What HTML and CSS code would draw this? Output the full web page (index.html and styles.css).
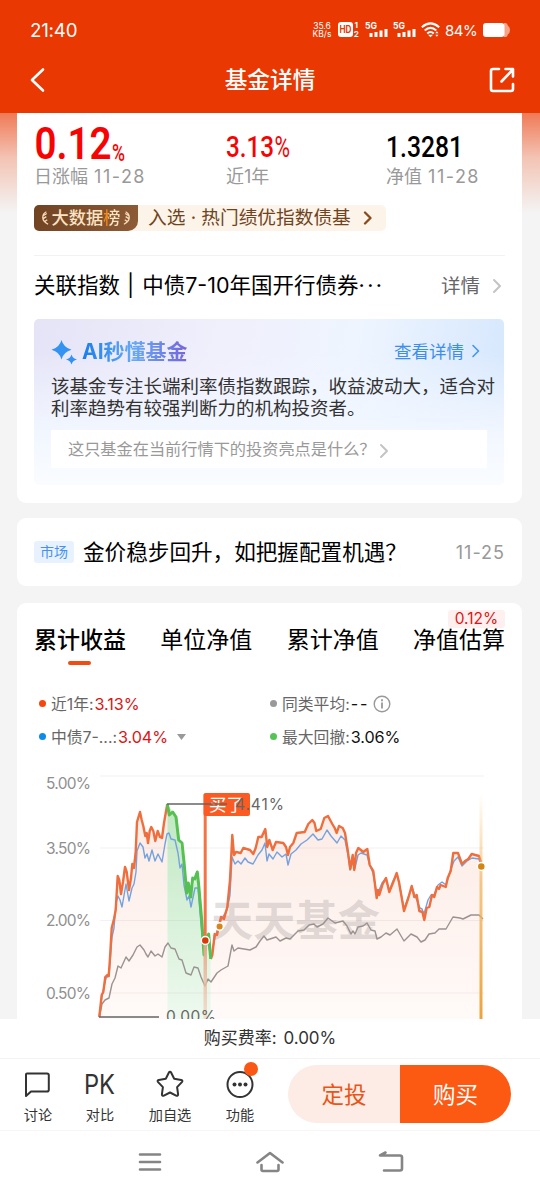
FILE: index.html
```html
<!DOCTYPE html>
<html lang="zh-CN">
<head>
  <meta charset="UTF-8" />
  <meta name="viewport" content="width=device-width, initial-scale=1.0" />
  <title>基金详情</title>
  <link rel="stylesheet" href="styles.css">
</head>
<body>
  <header class="top">
    <div class="status">
      <span class="clock">21:40</span>
      <div class="status-icons">
        <div class="speed"><span>35.6</span><span>KB/s</span></div>
        <svg class="hd" width="22" height="18" viewBox="0 0 22 18">
          <rect x="0" y="1" width="15" height="15" rx="3" fill="#fff"/>
          <text x="1.500" y="12.300" font-size="10" font-weight="700" fill="#e93802" textLength="12" lengthAdjust="spacingAndGlyphs">HD</text>
          <text x="16.500" y="7" font-size="8" font-weight="700" fill="#fff">1</text>
          <text x="15.700" y="16" font-size="8" font-weight="700" fill="#fff">2</text>
        </svg>
        <svg class="sim" width="23" height="18" viewBox="0 0 23 18" fill="#fff">
          <text x="0" y="8" font-size="9.500" font-weight="700" textLength="12" lengthAdjust="spacingAndGlyphs">5G</text>
          <path d="M4.500 12h3v4h-3zM9.500 11h3v5h-3zM14.500 9.500h3v6.500h-3zM19.500 8h3v8h-3z"/>
        </svg>
        <svg class="sim" width="23" height="18" viewBox="0 0 23 18" fill="#fff">
          <text x="0" y="8" font-size="9.500" font-weight="700" textLength="12" lengthAdjust="spacingAndGlyphs">5G</text>
          <path d="M4.500 12h3v4h-3zM9.500 11h3v5h-3zM14.500 9.500h3v6.500h-3zM19.500 8h3v8h-3z"/>
        </svg>
        <svg class="wifi" width="19" height="18" viewBox="0 0 19 18" fill="none" stroke="#fff" stroke-width="2">
          <path d="M.8 6.200Q9.500-1.400 18.200 6.200M3.700 9.400Q9.500 4.300 15.300 9.400M6.200 12.400Q9.500 9.600 12.800 12.400"/>
          <path d="M7 13.800h5L9.500 16.300z" fill="#fff" stroke="none"/>
          <path d="M14.300 12.200l1.600-2 1.600 2zM14.300 13.800l1.600 2 1.600-2z" fill="#fff" stroke="none"/>
        </svg>
        <span class="percent">84%</span>
        <svg class="battery" width="27" height="16" viewBox="0 0 27 16">
          <path d="M21 1h1.500q2 0 2.300 2.500Q27 5 27 8t-2.200 4.500Q24.500 15 22.500 15H21z" fill="#f6a588"/>
          <rect x="0" y="1" width="21.500" height="14" rx="3" fill="#fff"/>
        </svg>
      </div>
    </div>
    <div class="title-bar">
      <svg width="16" height="26" viewBox="0 0 16 26"><path d="M14 2.500 3 13l11 10.500" class="line white"/></svg>
      <h1>基金详情</h1>
      <svg width="26" height="26" viewBox="0 0 26 26"><path d="M10 2H4Q2 2 2 4v18q0 2 2 2h18q2 0 2-2v-5M12.500 14.500 23.500 3M16.500 2H24v7.500" class="line white"/></svg>
    </div>
  </header>

  <main>
    <section class="card summary">
      <div class="stats">
        <div class="stat">
          <svg width="120" height="54" viewBox="34 113 120 54" fill="#f60404">
            <text x="34.500" y="159" font-size="45" font-weight="600" textLength="77" lengthAdjust="spacingAndGlyphs">0.12</text>
            <text x="112" y="161" font-size="24" font-weight="500" textLength="13" lengthAdjust="spacingAndGlyphs">%</text>
          </svg>
          <span>日涨幅 <em>11-28</em></span>
        </div>
        <div class="stat">
          <svg width="120" height="54" viewBox="226 113 120 54" fill="#f60404">
            <text x="226" y="157" font-size="29" font-weight="500" textLength="48" lengthAdjust="spacingAndGlyphs">3.13</text>
            <text x="274.500" y="157" font-size="29" font-weight="400" textLength="15.500" lengthAdjust="spacingAndGlyphs">%</text>
          </svg>
          <span>近1年</span>
        </div>
        <div class="stat">
          <svg width="110" height="54" viewBox="386 113 110 54" fill="#000">
            <text x="386" y="157" font-size="29" font-weight="500" textLength="77" lengthAdjust="spacingAndGlyphs">1.3281</text>
          </svg>
          <span>净值 <em>11-28</em></span>
        </div>
      </div>

      <div class="rank">
        <div class="rank-tag">
          <svg width="8" height="18" viewBox="0 0 9 18"><path d="M6 2Q2 4 2 8.500 2 13 8 16M2.500 6.500 6.500 4M2 10 6 7.500M3.500 13.500 7 11" class="leaf"/></svg>
          <b>大数据<i>榜</i></b>
          <svg width="8" height="18" viewBox="0 0 9 18"><path d="M3 2Q7 4 7 8.500 7 13 1 16M6.500 6.500 2.500 4M7 10 3 7.500M5.500 13.500 2 11" class="leaf"/></svg>
        </div>
        <span class="rank-text">入选 · 热门绩优指数债基</span>
        <svg width="10" height="14" viewBox="0 0 10 14"><path d="M2 1.500 7.500 7 2 12.500" class="line brown"/></svg>
      </div>

      <div class="index-row">
        <span class="index-name">关联指数<em>|</em>中债7-10年国开行债券<em class="dots">···</em></span>
        <span class="more">详情</span>
        <svg width="10" height="16" viewBox="0 0 10 16"><path d="M2 2l6 6-6 6" class="line pale"/></svg>
      </div>

      <div class="ai">
        <div class="ai-head">
          <svg width="27" height="25" viewBox="0 0 27 25" fill="#3492f2"><path d="M10.500 0Q12.500 7.500 20.500 9.800 12.500 12 10.500 19.500 8.500 12 .5 9.800 8.500 7.500 10.500 0zM20.500 14.500q1 4 5.500 5-4.500 1-5.500 5-1-4-5.500-5 4.500-1 5.500-5z"/></svg>
          <h2>AI秒懂基金</h2>
          <a href="#">查看详情</a>
          <svg width="10" height="14" viewBox="0 0 10 14"><path d="M2 1.500 7.500 7 2 12.500" class="line blue"/></svg>
        </div>
        <p>该基金专注长端利率债指数跟踪，收益波动大，适合对<br>利率趋势有较强判断力的机构投资者。</p>
        <div class="ask">
          <span>这只基金在当前行情下的投资亮点是什么？</span>
          <svg width="10" height="16" viewBox="0 0 10 16"><path d="M2 2l6 6-6 6" class="line pale"/></svg>
        </div>
      </div>
    </section>

    <section class="card news">
      <span class="tag">市场</span>
      <span class="news-title">金价稳步回升，如把握配置机遇？</span>
      <span class="date">11-25</span>
    </section>

    <section class="card perf">
      <nav class="tabs">
        <a class="active" href="#">累计收益</a>
        <a href="#">单位净值</a>
        <a href="#">累计净值</a>
        <a href="#">净值估算<span class="rate">0.12%</span></a>
      </nav>
      <div class="legend">
        <div><i class="dot orange"></i>近1年:<b class="up">3.13%</b></div>
        <div><i class="dot gray"></i>同类平均:<b class="none">--</b>
          <svg width="18" height="18" viewBox="0 0 18 18"><circle cx="9" cy="9" r="7.800" fill="none" stroke="#999" stroke-width="1.400"/><path d="M9 7.500V13.500M9 4.300v1.900" stroke="#999" stroke-width="1.800"/></svg>
        </div>
        <div><i class="dot azure"></i>中债7-...:<b class="up">3.04%</b>
          <svg class="caret" width="9" height="6" viewBox="0 0 9 6"><path d="M0 0h9L4.500 6z" fill="#999"/></svg>
        </div>
        <div><i class="dot green"></i>最大回撤:<b>3.06%</b></div>
      </div>

      <svg class="chart" width="505" height="254" viewBox="17 765 505 254">
        <defs>
          <linearGradient id="pink" x1="0" y1="810" x2="0" y2="1019" gradientUnits="userSpaceOnUse">
            <stop offset="0" stop-color="#fcebe5"/><stop offset="1" stop-color="#fffaf8"/>
          </linearGradient>
          <linearGradient id="mint" x1="0" y1="804" x2="0" y2="1019" gradientUnits="userSpaceOnUse">
            <stop offset="0" stop-color="#bfe8c1"/><stop offset="1" stop-color="#eef9ef"/>
          </linearGradient>
          <linearGradient id="cursor" x1="0" y1="793" x2="0" y2="1019" gradientUnits="userSpaceOnUse">
            <stop offset="0" stop-color="#f5b55a" stop-opacity="0"/><stop offset=".4" stop-color="#f2b35a" stop-opacity=".7"/><stop offset="1" stop-color="#eda33b"/>
          </linearGradient>
          <linearGradient id="stem" x1="0" y1="940" x2="0" y2="1019" gradientUnits="userSpaceOnUse">
            <stop offset="0" stop-color="#e6a582"/><stop offset="1" stop-color="#f3cdbb" stop-opacity=".6"/>
          </linearGradient>
        </defs>
        <!-- area under the return line -->
        <path fill="url(#pink)" d="M99 1019 102 995 107 975 110 958 112 928 116 910 118 876 121 894 125 867 129 890 132 864 136 852 137 822 140 812 145 836 148 843 151 827 155 841 158 831 162 838 167 804V1019zM211 1019V959L215 934 221 917 227 907 230 880 232 835 234 855 250 850 253 854 258 837 265 829 267 847 273 850 276 842 283 843 288 855 293 843 297 833 305 832 312 820 316 831 321 829 324 818 328 816 337 833 339 826 343 828 348 850 350 869 353 855 354 870 358 848 367 849 370 865 373 871 377 898 386 878 389 892 397 873 404 911 412 886 419 911 424 920 432 895 437 887 446 887 453 853 458 853 462 864 472 854 479 856 482 866V1019z"/>
        <path fill="url(#mint)" d="M167.300 1019V804L176 817 179 840 184 862 187 891 190.700 897 197 872 202 920 204 955 209 934 210.700 959V1019z"/>
        <path d="M100 776h384M100 848h384M100 920.500h384M100 993h384" stroke="#9b8e88" stroke-opacity=".12"/>
        <text class="mark" x="211" y="936" textLength="169" lengthAdjust="spacingAndGlyphs">天天基金</text>
        <!-- peer average -->
        <polyline class="series avg" points="99.500,1017 102,1004 105,1000 109,998 112,984 115,978 118,966 121,968 126,957 129,961 133,955 137,947 140,945 144,950 146,954 148,957 151,951 155,956 158,954 162,957 165,947 168,943 171,948 175,949 179,959 182,960 186,973 191,975 194,967 198,968 201,977 205,986 208,979 211,982 217,973 221,970 228,966 232,945 234,951 238,948 250,950 256,947 260,941 264,936 267,940 276,937 280,941 286,938 290,939 298,931 304,930 309,925 314,924 317,927 323,924 328,918 335,923 343,921 347,926 351,934 353,931 355,934 358,927 363,926 367,923 371,930 375,931 377,939 381,937 386,933 390,935 397,929 404,941 411,934 417,937 421,942 425,940 429,934 435,933 439,929 446,929 453,917 460,918 463,919 471,915 479,915 483,919"/>
        <polyline class="series bench" points="99,1017 102,996 106,978 109,976 112,937 114,928 116,903 118,896 120,900 122,907 126,884 129,901 132,888 134,884 136,872 137,851 140,843 143,847 145,858 147,854 149,861 152,850 155,861 158,854 162,862 165,844 167,834 169,833 171,839 175,840 178,853 180,868 182,864 184,885 187,900 189,896 191,907 195,888 198,888 201,924 204,954 207,938 211,958 215,937 221,920 227,910 230,895 232,857 235,864 238,861 241,864 245,858 248,862 253,864 258,855 262,850 265,843 267,861 269,854 273,859 277,852 282,857 286,854 288,865 291,854 296,850 301,844 307,840 313,834 318,840 322,839 327,830 331,836 337,843 341,836 345,840 348,855 350,870 353,862 355,868 358,855 361,853 367,855 370,866 373,873 377,895 382,883 386,878 389,891 393,881 397,874 399,883 404,909 408,898 412,887 415,896 420,908 422,909 424,914 428,900 431,895 434,895 438,885 442,882 446,885 450,872 454,861 458,857 462,866 467,861 472,858 479,859 482,870"/>
        <polyline class="series fund" points="99.300,1017 101.700,995 103.300,992 105.300,977 107.300,975 108.700,976 110,958 111.700,928 114,919 115.700,910 117.700,876 119.300,880 121,894 123,882 125,867 126.700,872 129,890 131,878 132.300,864 134,868 135.700,852 137,822 140,812 141.700,820 143.300,826 145.300,836 146.700,833 148,843 149.700,831 151.300,827 153.300,831 155.300,841 157.700,831 160,837 162,838 164,823 167.300,804"/>
        <polyline class="series fund" points="210.700,959 212.300,955 214.700,934 217,935 218.700,927 221,917 224,919 227.300,907 230,880 232.300,835 234,855 236,852 240.700,853 243.300,848 250,850 253.300,854 255.700,848 258.300,837 261.700,837 265.300,829 267.300,847 269.300,840 272.700,850 276,842 283.300,843 286,847 288,855 290,847 293.300,843 296.700,833 304.700,832 308.300,824 312.300,820 314.500,823 316.300,831 320.700,829 324.300,818 328,816 330.700,821 332.300,824 334.700,828 336.700,833 339,826 342.700,828 345,833 347.700,850 350.300,869 352.700,855 354.300,870 356,853 358.300,848 363.300,852 367.300,849 369.700,865 373.300,871 376.700,898 378,890 379.300,895 382.700,884 386,878 389.300,892 393.300,882 396.700,873 399,882 404,911 408.300,898 411.700,886 414.300,897 416.700,895 419.300,911 422.300,912 424.300,920 426.700,908 429.300,907 432,895 434.300,897 437,887 439,889 440.700,885 445.700,887 447.700,878 450.700,871 453.300,853 458,853 462,864 465,861 468.300,859 471.700,854 479,856 481.300,863"/>
        <!-- drawdown stretch -->
        <polyline class="series fall" points="167.300,804 169.300,815 172.700,812 176,817 178.700,840 182,843 184,862 186.700,893 188.300,883 190.700,897 192.700,878 194.700,879 197.300,872 198.700,885 201.700,920 204,955 205.700,940 208.700,934 210.700,959"/>
        <rect x="479.500" y="793" width="3" height="226" fill="url(#cursor)"/>
        <rect x="203.500" y="940" width="3.500" height="79" fill="url(#stem)"/>
        <path d="M205.200 794V940" stroke="#f47345" stroke-width="3"/>
        <rect x="203.500" y="793" width="46.500" height="23" rx="2" fill="#fb5b22"/>
        <text x="209" y="811" font-size="17.500" fill="#fff" textLength="35">买了</text>
        <path d="M167 804h60M99 1017h60" stroke="#666" stroke-width="1.500"/>
        <text x="235" y="810" font-size="15.500" fill="#666" textLength="49">4.41%</text>
        <text x="166" y="1022" font-size="15.500" fill="#666" textLength="50">0.00%</text>
        <g stroke="#fff" stroke-width="1.500">
          <circle cx="205.300" cy="940.500" r="4" fill="#d83a0c"/>
          <circle cx="219.600" cy="926.500" r="3.800" fill="#d8851b"/>
          <circle cx="481.300" cy="866.500" r="4" fill="#d38612"/>
        </g>
        <g class="axis">
          <text x="46" y="788.500" textLength="45">5.00%</text>
          <text x="46" y="853.500" textLength="45">3.50%</text>
          <text x="46" y="926" textLength="45">2.00%</text>
          <text x="46" y="998.500" textLength="45">0.50%</text>
        </g>
      </svg>
    </section>
  </main>

  <footer>
    <div class="fee">购买费率: <span>0.00%</span></div>
    <div class="actions">
      <a class="tool" href="#">
        <svg width="32" height="32" viewBox="0 0 32 32"><path d="M5 5.500h20q1.800 0 1.800 1.800v14.400q0 1.800-1.800 1.800H9L4 28V6.500q0-1 1-1z" class="line ink"/></svg>
        <span>讨论</span>
      </a>
      <a class="tool pk" href="#">
        <svg width="32" height="32" viewBox="0 0 32 32"><text x="0" y="25.500" font-size="26.500" fill="#333" textLength="31" lengthAdjust="spacingAndGlyphs">PK</text></svg>
        <span>对比</span>
      </a>
      <a class="tool star" href="#">
        <svg width="32" height="32" viewBox="0 0 32 32"><path d="M14.800 4.700q1.200-1.700 2.400 0l3 6 7 1.200q2 .6.700 2.200l-4.800 5 1 7.300q-.1 1.900-2 1.200L16 24.500l-6.100 3.100q-1.900.7-2-1.200l1-7.300-4.800-5q-1.300-1.600.7-2.200l7-1.200z" class="line ink"/></svg>
        <span>加自选</span>
      </a>
      <a class="tool" href="#">
        <svg width="32" height="32" viewBox="0 0 32 32"><circle cx="16" cy="16.500" r="12.500" class="line ink"/><g fill="#333"><circle cx="10.500" cy="16.500" r="2"/><circle cx="16" cy="16.500" r="2"/><circle cx="21.500" cy="16.500" r="2"/></g></svg>
        <span>功能</span>
        <i class="badge"></i>
      </a>
      <div class="buttons">
        <a class="plan" href="#">定投</a>
        <a class="buy" href="#">购买</a>
      </div>
    </div>
    <div class="system">
      <svg width="24" height="22" viewBox="0 0 24 22"><path d="M2 3.500h20M2 11h20M2 18.500h20" class="line sys"/></svg>
      <svg width="28" height="22" viewBox="0 0 28 22"><path d="M1.500 11.500 14 2l12.500 9.500M5.500 14v4.500q0 1.500 1.500 1.500h14q1.500 0 1.500-1.500V14" class="line sys"/></svg>
      <svg width="26" height="24" viewBox="0 0 26 24"><path d="M7.500 2.500 2 5.500h20q2 0 2 2v11q0 2-2 2H6" class="line sys"/></svg>
    </div>
  </footer>
</body>
</html>
```

FILE: styles.css
```css
* { box-sizing: border-box; margin: 0; padding: 0; }
body {
  width: 540px;
  height: 1194px;
  overflow: hidden;
  display: flex;
  flex-direction: column;
  font-family: Inter, "Noto Sans CJK SC", sans-serif;
  background: #f4f4f4;
  color: #000;
}
a { text-decoration: none; color: inherit; }
i, em { font-style: normal; }
svg { display: block; flex-shrink: 0; }
span, a { white-space: nowrap; }

/* icon strokes */
.line {
  fill: none;
  stroke-width: 2;
  stroke-linecap: round;
  stroke-linejoin: round;
}
.white { stroke: #fff; stroke-width: 2.6; }
.brown { stroke: #8a4b1c; stroke-width: 2.3; }
.blue { stroke: #4595ee; stroke-width: 1.6; }
.pale { stroke: #c4c4c4; }
.ink { stroke: #333; }
.sys { stroke: #858585; stroke-width: 2.6; }
.leaf { fill: none; stroke: #f8ddb7; stroke-width: 1.5; }

/* header */
.top {
  height: 113px;
  flex-shrink: 0;
  background: #e93802;
  color: #fff;
}
.status {
  display: flex;
  justify-content: space-between;
  align-items: center;
  height: 60px;
  padding: 0 30px;
}
.clock { font-size: 18.7px; letter-spacing: -.2px; }
.status-icons { display: flex; align-items: center; }
.speed {
  display: flex;
  flex-direction: column;
  align-items: center;
  width: 20px;
  margin-right: 6px;
  font-size: 8.5px;
  line-height: 8.5px;
}
.hd { margin-right: 5px; }
.sim { margin-right: 5px; }
.wifi { margin-right: 5px; }
.percent { width: 33px; font-size: 15px; letter-spacing: -.5px; }
.battery { margin-left: 5px; }
.title-bar {
  display: flex;
  justify-content: space-between;
  align-items: center;
  height: 40px;
  padding: 0 25px 0 29px;
}
.title-bar h1 {
  padding-left: 6px;
  font-size: 22.7px;
  font-weight: 500;
  line-height: 42px;
}

main {
  height: 906px;
  flex-shrink: 0;
  padding: 0 18px 0 17px;
  overflow: hidden;
  background: linear-gradient(#ef7a56, #f3c4b4 45px, #f4f4f4 100px);
}
.card {
  width: 505px;
  background: #fff;
  border-radius: 9px;
}

/* summary */
.summary {
  height: 390px;
  border-radius: 0 0 9px 9px;
  padding: 0 17px;
}
.stats {
  display: grid;
  grid-template-columns: 192px 160px 119px;
  height: 92px;
}
.stats svg { font-family: Roboto, sans-serif; }
.stat span {
  display: block;
  font-size: 18px;
  line-height: 20px;
  color: #999;
}
.stat em { margin-left: 1px; letter-spacing: 1.5px; }
.rank {
  display: flex;
  align-items: center;
  width: 352px;
  height: 26px;
  border-radius: 5px;
  background: #fdf4e9;
  color: #70431e;
}
.rank-tag {
  display: flex;
  align-items: center;
  justify-content: center;
  width: 104px;
  height: 26px;
  border-radius: 5px 0 10px 5px;
  background: linear-gradient(100deg, #704323, #8d5b36);
  color: #fbe3c3;
  font-size: 17.2px;
}
.rank-tag b {
  margin: 0 3px;
  font-weight: 500;
  line-height: 26px;
  white-space: nowrap;
}
.rank-tag i {
  background: linear-gradient(90deg, #f08a1a 30%, #fbe3c3 35%);
  -webkit-background-clip: text;
  background-clip: text;
  color: transparent;
}
.rank-text {
  width: 216px;
  padding-left: 10px;
  font-size: 18.7px;
  line-height: 28px;
}
.rank svg:last-child { margin-left: 9px; }
.rank-tag svg:last-child { margin-left: 0; }
.index-row {
  display: flex;
  align-items: center;
  height: 60px;
  margin-top: 24px;
  border-top: 1px solid #f2f2f2;
}
.index-name { width: 407px; font-size: 21.5px; line-height: 30px; }
.index-name em { padding: 0 8px 0 7px; }
.index-name .dots { padding: 0; letter-spacing: 2.4px; }
.more { width: 51px; font-size: 19.5px; color: #666; }
.index-row span { margin-top: -2px; }
.ai {
  width: 470px;
  height: 166px;
  margin-top: 4px;
  padding: 16px 0 0 17px;
  border-radius: 5px;
  background:
    linear-gradient(to bottom, rgba(246, 250, 255, 0) 20%, #f2f7ff 70%, #fafcff),
    linear-gradient(100deg, #e5e4f7, #f0effc 38%, #eef5ff 65%, #d4e6fd);
}
.ai-head { display: flex; align-items: center; height: 32px; }
.ai-head > svg:first-child { margin-top: 3px; }
.ai-head h2 {
  width: 312px;
  margin: 2px 0 0 4px;
  font-size: 21px;
  line-height: 32px;
  background: linear-gradient(90deg, #187eea, #65a9f7 52px, #7467dc 104px);
  -webkit-background-clip: text;
  background-clip: text;
  color: transparent;
}
.ai-head a { width: 77px; margin-top: -2px; font-size: 17.5px; color: #3d8eea; }
.ai p {
  margin-top: 8px;
  white-space: nowrap;
  font-size: 18.5px;
  line-height: 22px;
  color: #333;
}
.ask {
  display: flex;
  align-items: center;
  width: 436px;
  height: 38px;
  margin-top: 11px;
  padding-left: 17px;
  background: #fff;
  font-size: 16.2px;
  color: #999;
}
.ask span { width: 300px; margin-top: -2px; }
.ask svg { margin: 3px 0 0 11px; }

/* news */
.news {
  display: flex;
  align-items: center;
  height: 68px;
  margin-top: 15px;
  padding: 0 17px;
}
.tag {
  width: 40px;
  height: 22px;
  border-radius: 3px;
  background: #e8f2fe;
  color: #4592ee;
  font-size: 14px;
  line-height: 21px;
  text-align: center;
}
.news-title { margin-left: 9px; font-size: 21.6px; line-height: 30px; }
.date {
  margin-left: auto;
  font-size: 18px;
  letter-spacing: 1px;
  color: #999;
}

/* performance */
.perf {
  height: 416px;
  margin-top: 17px;
  border-radius: 9px 9px 0 0;
}
.tabs {
  display: flex;
  justify-content: space-between;
  height: 76px;
  padding: 20px 17px 0;
  font-size: 23px;
  line-height: 35px;
}
.tabs a { position: relative; height: 34px; }
.tabs .active { font-weight: 500; }
.tabs .active::after {
  content: "";
  position: absolute;
  left: 34px;
  top: 38px;
  width: 23px;
  height: 4px;
  border-radius: 2px;
  background: #f04d12;
}
.rate {
  position: absolute;
  right: 0;
  top: -13px;
  width: 57px;
  height: 18px;
  border-radius: 3px;
  background: #fff0f0;
  color: #e01616;
  font-size: 15.5px;
  line-height: 18px;
  text-align: center;
}
.legend {
  display: grid;
  grid-template-columns: 231px 1fr;
  grid-auto-rows: 33px;
  height: 86px;
  padding: 8px 21px 0;
  font-size: 15.8px;
  color: #666;
}
.legend div { display: flex; align-items: center; }
.legend b {
  margin-left: 1px;
  font-size: 16.2px;
  font-weight: 400;
  letter-spacing: -.1px;
  color: #111;
}
.legend .up { color: #de1414; }
.legend .none { letter-spacing: 1.8px; }
.legend svg { margin-left: 4px; }
.legend .caret { margin-left: 9px; }
.dot { width: 7px; height: 7px; margin: 0 5px 0 1px; border-radius: 50%; }
.orange { background: #f6460e; }
.gray { background: #999; }
.azure { background: #0c8bea; }
.green { background: #55c455; }
.series { fill: none; stroke-linejoin: round; }
.fund { stroke: #ef6e3d; stroke-width: 2.4; }
.bench { stroke: #75a2df; stroke-width: 1.4; }
.avg { stroke: #9b9391; stroke-width: 1.4; }
.fall { stroke: #56c152; stroke-width: 3; }
.mark { font-size: 42px; font-weight: 700; fill: #8b8583; fill-opacity: .26; }
.axis { font-size: 15.5px; fill: #8f8f8f; }

/* footer */
footer { height: 175px; flex-shrink: 0; background: #fff; }
.fee {
  height: 39px;
  font-size: 17px;
  line-height: 39px;
  text-align: center;
  color: #333;
}
.fee span { margin-left: 2px; }
.actions {
  display: flex;
  height: 73px;
  padding: 6px 0 0 7px;
  border-top: 1px solid #f2f2f2;
  border-bottom: 1px solid #f6f6f6;
}
.tool {
  position: relative;
  display: flex;
  flex-direction: column;
  align-items: center;
  width: 62px;
  flex-shrink: 0;
  padding-top: 3px;
  font-size: 14.2px;
  line-height: 30px;
  color: #333;
}
.star, .star + .tool { width: 70px; }
.pk + .star { margin-left: 4px; }
.badge {
  position: absolute;
  left: 39px;
  top: -3px;
  width: 14px;
  height: 14px;
  border-radius: 50%;
  background: #fa5614;
}
.buttons {
  display: flex;
  width: 223px;
  height: 58px;
  margin-left: 13px;
  border-radius: 29px;
  overflow: hidden;
  font-size: 22.5px;
  line-height: 60px;
  text-align: center;
}
.plan { width: 112px; background: #fcece5; color: #e95517; }
.buy { width: 111px; background: #fc5913; color: #fff; }
.system {
  display: flex;
  align-items: center;
  gap: 94px;
  height: 62px;
  padding-left: 138px;
}
```
